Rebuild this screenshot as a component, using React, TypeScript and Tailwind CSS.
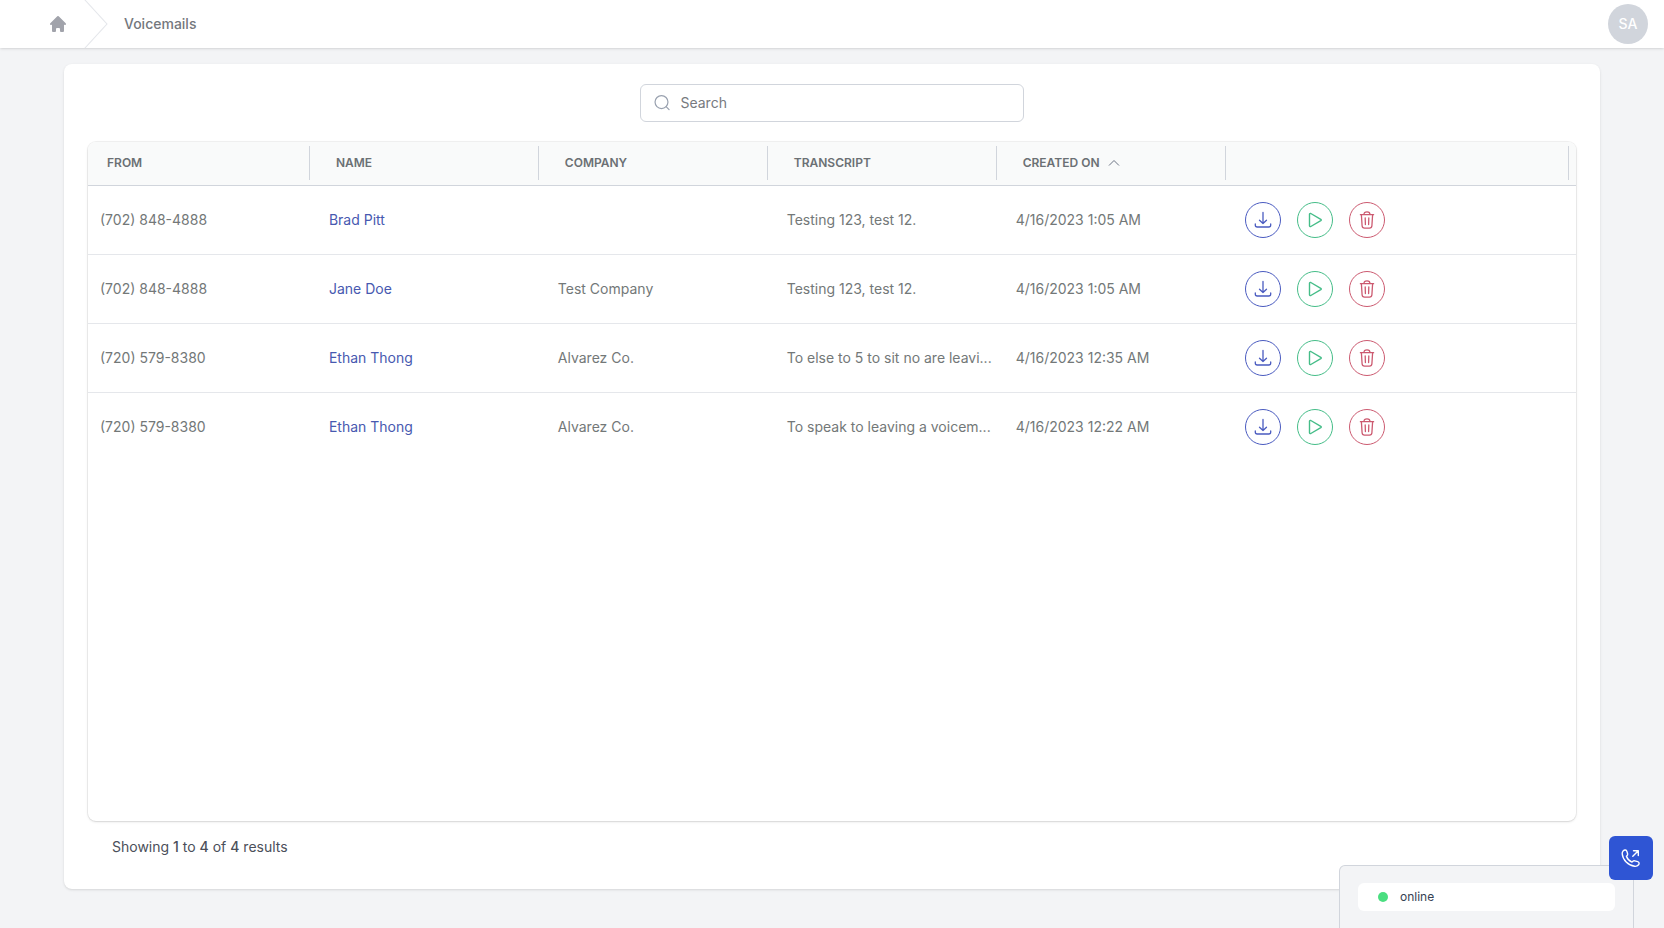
import { HiHome } from "react-icons/hi";

type Voicemail = {
  id: number;
  from: string;
  name: string;
  company: string;
  transcript: string;
  createdOn: string;
};

const voicemails: Voicemail[] = [
  {
    id: 1,
    from: "(702) 848-4888",
    name: "Brad Pitt",
    company: "",
    transcript: "Testing 123, test 12.",
    createdOn: "4/16/2023 1:05 AM",
  },
  {
    id: 2,
    from: "(702) 848-4888",
    name: "Jane Doe",
    company: "Test Company",
    transcript: "Testing 123, test 12.",
    createdOn: "4/16/2023 1:05 AM",
  },
  {
    id: 3,
    from: "(720) 579-8380",
    name: "Ethan Thong",
    company: "Alvarez Co.",
    transcript: "To else to 5 to sit no are leavi...",
    createdOn: "4/16/2023 12:35 AM",
  },
  {
    id: 4,
    from: "(720) 579-8380",
    name: "Ethan Thong",
    company: "Alvarez Co.",
    transcript: "To speak to leaving a voicem...",
    createdOn: "4/16/2023 12:22 AM",
  },
];

const columns = ["From", "Name", "Company", "Transcript", "Created On", ""];

const DownloadIcon = () => (
  <svg className="size-5" viewBox="0 0 20 20" fill="none" stroke="currentColor" strokeWidth="1.3" strokeLinecap="round" strokeLinejoin="round">
    <path d="M10 2.500v11M6.500 10.300 10 13.500l3.500-3.200" />
    <path d="M2.300 14v1.200c0 1.200.7 1.800 1.900 1.800h11.600c1.200 0 1.900-.6 1.900-1.800V14" />
  </svg>
);

const PlayIcon = () => (
  <svg className="size-5" viewBox="0 0 20 20" fill="none" stroke="currentColor" strokeWidth="1.4" strokeLinejoin="round">
    <path d="M4.500 4.300v11.400c0 .8.6 1.100 1.300.8l10-5.800c.6-.4.600-1 0-1.400l-10-5.800c-.7-.3-1.300 0-1.300.8Z" />
  </svg>
);

const TrashIcon = () => (
  <svg className="size-5" viewBox="0 0 20 20" fill="none" stroke="currentColor" strokeWidth="1.3" strokeLinecap="round" strokeLinejoin="round">
    <path d="M3.400 4.700h13.200M7 4.500c0-1.700.9-2.700 3-2.700s3 1 3 2.700" />
    <path d="m4.400 4.900.7 10.900c.1 1.600.8 2.400 2.400 2.400h5c1.600 0 2.300-.8 2.400-2.400l.7-10.900" />
    <path d="m8.200 8 .2 6.500M11.800 8l-.2 6.500" />
  </svg>
);

const SearchIcon = () => (
  <svg className="size-5" viewBox="0 0 20 20" fill="none" stroke="currentColor" strokeWidth="1.3" strokeLinecap="round">
    <circle cx="9.200" cy="9" r="7" />
    <path d="m14.200 14 3.200 3.200" />
  </svg>
);

const PhoneIcon = () => (
  <svg className="size-5" viewBox="0 0 20 20" fill="none" stroke="currentColor" strokeWidth="1.400" strokeLinecap="round" strokeLinejoin="round">
    <path d="M2.300 2.700c1.200-1.200 3-1 3.600.7l.7 2.300c.2.800 0 1.400-.6 2l-.6.600c.9 2.600 2.900 4.700 5.600 5.800l.9-.8c.6-.5 1.200-.6 1.900-.4l2.900.8c1.500.4 1.800 2 .9 3.100-1 1.200-2.400 1.700-4 1.500C7.200 17.600 1.700 12 1.200 5.800c-.1-1.200.3-2.300 1.100-3.100Z" />
    <path d="m11.800 8.200 5.200-5.200M12.500 2.700h4.800v4.800" />
  </svg>
);

const Header = () => (
  <header className="flex h-12 items-center justify-between bg-white pr-4 pl-12 shadow">
    <nav aria-label="Breadcrumb" className="flex h-full items-center">
      <a href="#" aria-label="Home" className="text-[#a1a3ab]">
        <HiHome className="size-5" />
      </a>
      <svg className="ml-4 h-full w-6 text-gray-200" viewBox="0 0 24 44" preserveAspectRatio="none" fill="currentColor">
        <path d="M.293 0l22 22-22 22h1.414l22-22-22-22H.293z" />
      </svg>
      <a href="#" className="ml-4 text-sm font-medium text-[#74777d]">
        Voicemails
      </a>
    </nav>
    <button className="size-10 rounded-full bg-gray-300 text-sm font-medium text-white">SA</button>
  </header>
);

const Row = ({ item }: { item: Voicemail }) => (
  <tr className="h-[69px] border-b border-gray-200 last:border-b-0">
    <td className="pl-3">{item.from}</td>
    <td className="pl-3">
      <a href="#" className="text-[#4759b0]">
        {item.name}
      </a>
    </td>
    <td className="pl-3">{item.company}</td>
    <td className="truncate pl-3">{item.transcript}</td>
    <td className="pl-3">{item.createdOn}</td>
    <td className="pl-3">
      <div className="flex gap-4">
        <button aria-label="Download" className="flex size-9 items-center justify-center rounded-full border border-[#4a5bc0] text-[#4a5bc0]">
          <DownloadIcon />
        </button>
        <button aria-label="Play" className="flex size-9 items-center justify-center rounded-full border border-[#45bd88] text-[#45bd88]">
          <PlayIcon />
        </button>
        <button aria-label="Delete" className="flex size-9 items-center justify-center rounded-full border border-[#cc5a70] text-[#cc5a70]">
          <TrashIcon />
        </button>
      </div>
    </td>
  </tr>
);

const Table = () => (
  <div className="flex-1 overflow-hidden rounded-lg shadow ring-1 ring-black/5">
    <table className="w-full table-fixed border-collapse text-left text-sm text-[#737878]">
      <thead className="bg-[#f9fafa] text-xs text-[#6b7074] uppercase">
        <tr className="h-[43px] border-b border-gray-300">
          {columns.map((column, i) => (
            <th key={i} className="w-2/13 py-1 pr-[7px] pl-0 font-semibold last:w-3/13">
              <div className="flex h-[34px] items-center gap-2 border-r border-gray-300 pl-[19px]">
                {column}
                {column === "Created On" && (
                  <svg className="h-2 w-3 text-gray-500" viewBox="0 0 12 8" fill="none" stroke="currentColor">
                    <path d="m1 6.500 5-5 5 5" />
                  </svg>
                )}
              </div>
            </th>
          ))}
        </tr>
      </thead>
      <tbody>
        {voicemails.map((item) => (
          <Row key={item.id} item={item} />
        ))}
      </tbody>
    </table>
  </div>
);

// Softphone status in the bottom right corner
const Dialer = () => (
  <>
    <div className="fixed right-[30px] bottom-0 h-[63px] w-[295px] rounded-t-md border border-b-0 border-gray-300 bg-gray-100 px-[18px] pt-[17px]">
      <div className="flex h-7 items-center gap-3 rounded-md bg-white px-5 text-xs text-gray-700">
        <span className="size-2.5 rounded-full bg-[#4ade80]" />
        online
      </div>
    </div>
    <button aria-label="Call" className="fixed right-[11px] bottom-12 flex size-11 items-center justify-center rounded-md bg-[#2f55d4] text-white">
      <PhoneIcon />
    </button>
  </>
);

const App = () => {
  return (
    <div className="flex min-h-screen flex-col bg-gray-100 font-[Inter,sans-serif]">
      <Header />
      <main className="flex flex-1 flex-col px-16 pt-4 pb-[39px]">
        <div className="flex flex-1 flex-col rounded-lg bg-white px-6 pt-5 shadow">
          <label className="mx-auto mb-5 flex h-[38px] w-full max-w-sm items-center gap-[9px] rounded-md border border-gray-300 px-3 text-gray-400">
            <SearchIcon />
            <input
              type="text"
              aria-label="Search"
              placeholder="Search"
              className="w-full text-sm text-gray-700 outline-none placeholder:text-[#777a80]"
            />
          </label>
          <Table />
          <p className="px-6 pt-4 pb-8 text-sm text-[#4b4f5a]">
            Showing <span className="font-medium">1</span> to <span className="font-medium">4</span> of{" "}
            <span className="font-medium">4</span> results
          </p>
        </div>
      </main>
      <Dialer />
    </div>
  );
};

export default App;
